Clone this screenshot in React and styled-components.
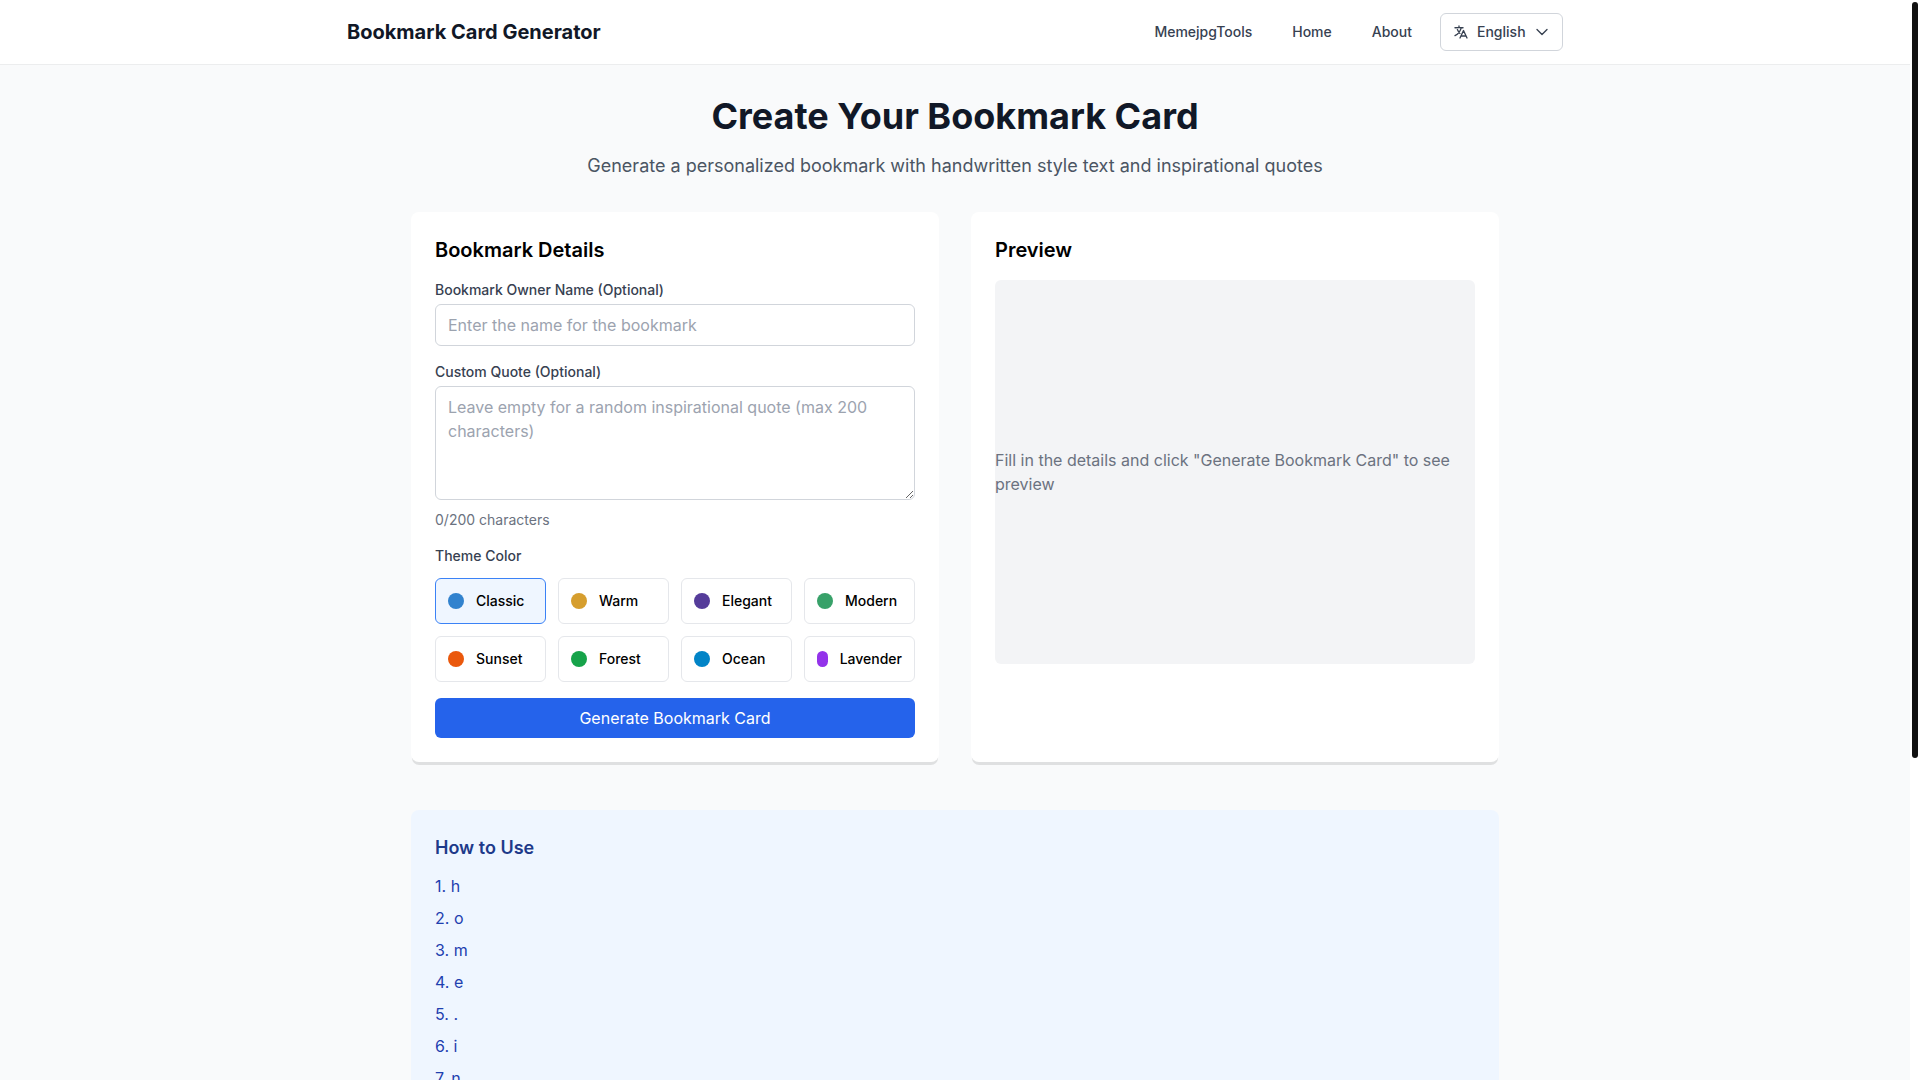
import React, { useEffect, useState } from 'react';
import styled, { createGlobalStyle } from 'styled-components';

const GlobalStyle = createGlobalStyle`
  *, *::before, *::after {
    box-sizing: border-box;
  }
  html {
    scrollbar-width: none; /* ScrollRail is shown instead */
  }
  body {
    margin: 0;
    font-family: Inter, 'Liberation Sans', sans-serif;
    font-size: 16px;
    line-height: 24px;
    color: #000;
  }
  h1, h2, p, ol {
    margin: 0;
    padding: 0;
  }
  button, input, textarea, select {
    font: inherit;
    color: inherit;
    margin: 0;
  }
`;

const Page = styled.div`
  min-height: 100vh;
  margin-right: 10px;
  background-color: #f9fafb;
`;

const ScrollRail = styled.div`
  position: fixed;
  top: 0;
  right: 0;
  bottom: 0;
  width: 10px;
  padding: 2px;
  background-color: #fff;
`;

const ScrollThumb = styled.div`
  width: 6px;
  border-radius: 3px;
  background-color: #111;
`;

const Header = styled.header`
  background-color: #fff;
  box-shadow: 0 1px 0 rgba(0, 0, 0, 0.05);
`;

const HeaderInner = styled.div`
  display: flex;
  align-items: center;
  justify-content: space-between;
  height: 64px;
  max-width: 1280px;
  margin: 0 auto;
  padding: 0 32px;
`;

const Brand = styled.a`
  font-size: 20px;
  line-height: 28px;
  font-weight: 700;
  color: #111827;
  text-decoration: none;
`;

const Nav = styled.nav`
  display: flex;
  align-items: center;
  gap: 16px;
  font-size: 14px;
  line-height: 20px;
  font-weight: 500;
  color: #374151;
`;

const NavLink = styled.a`
  padding: 8px 12px;
  color: inherit;
  text-decoration: none;
`;

const LanguageBox = styled.label`
  display: flex;
  align-items: center;
  gap: 8px;
  padding: 8px 12px;
  border: 1px solid #d1d5db;
  border-radius: 6px;
`;

const LanguageSelect = styled.select`
  appearance: none;
  padding: 0;
  border: none;
  background: none;
  cursor: pointer;
`;

const Icon = styled.svg`
  flex-shrink: 0;
  width: 16px;
  height: 16px;
  fill: none;
  stroke: currentColor;
  stroke-width: 2;
  stroke-linecap: round;
  stroke-linejoin: round;
`;

const Main = styled.main`
  max-width: 1152px;
  margin: 0 auto;
  padding: 32px;
`;

const Intro = styled.div`
  margin-bottom: 32px;
  text-align: center;
`;

const Title = styled.h1`
  margin-bottom: 16px;
  font-size: 36px;
  line-height: 40px;
  font-weight: 700;
  color: #111827;
`;

const Subtitle = styled.p`
  font-size: 18px;
  line-height: 28px;
  color: #4b5563;
`;

const Columns = styled.div`
  display: grid;
  grid-template-columns: repeat(2, minmax(0, 1fr));
  gap: 32px;
`;

const Card = styled.section`
  padding: 24px;
  background-color: #fff;
  border-radius: 8px;
  box-shadow: 0 4px 0 -1px rgba(0, 0, 0, 0.1);
`;

const CardTitle = styled.h2`
  margin-bottom: 16px;
  font-size: 20px;
  line-height: 28px;
  font-weight: 600;
`;

const Form = styled.form`
  display: flex;
  flex-direction: column;
  gap: 16px;
`;

const Field = styled.div`
  display: flex;
  flex-direction: column;
`;

const Label = styled.label`
  margin-bottom: ${(props) => props.$gap || '4px'};
  font-size: 14px;
  line-height: 20px;
  font-weight: 500;
  color: #374151;
`;

const TextInput = styled.input`
  width: 100%;
  height: 42px;
  padding: 8px 12px;
  border: 1px solid #d1d5db;
  border-radius: 6px;
  background-color: #fff;

  &::placeholder {
    color: #9ca3af;
  }
`;

const TextArea = styled.textarea`
  width: 100%;
  padding: 8px 12px;
  border: 1px solid #d1d5db;
  border-radius: 6px;
  background-color: #fff;
  resize: vertical;

  &::placeholder {
    color: #9ca3af;
  }
`;

const Counter = styled.p`
  margin-top: 10px;
  font-size: 14px;
  line-height: 20px;
  color: #6b7280;
`;

const ThemeGrid = styled.div`
  display: grid;
  grid-template-columns: repeat(4, minmax(0, 1fr));
  gap: 12px;
`;

const ThemeButton = styled.button`
  display: flex;
  align-items: center;
  gap: 12px;
  padding: 12px;
  border: 1px solid ${(props) => (props.$active ? '#3b82f6' : '#e5e7eb')};
  border-radius: 6px;
  background-color: ${(props) => (props.$active ? '#eff6ff' : '#fff')};
  font-size: 14px;
  line-height: 20px;
  font-weight: 500;
  cursor: pointer;
`;

const Swatch = styled.span`
  width: 16px;
  height: 16px;
  border-radius: 9999px;
  background-color: ${(props) => props.$color};
`;

const SubmitButton = styled.button`
  padding: 8px 16px;
  border: none;
  border-radius: 6px;
  background-color: #2563eb;
  color: #fff;
  cursor: pointer;
`;

const PreviewBox = styled.div`
  display: flex;
  align-items: center;
  justify-content: center;
  height: 384px;
  border-radius: 6px;
  background-color: #f3f4f6;
  color: #6b7280;
`;

const HowTo = styled.section`
  margin-top: 48px;
  padding: 24px;
  border-radius: 8px;
  background-color: #eff6ff;
`;

const HowToTitle = styled.h2`
  margin-bottom: 12px;
  font-size: 18px;
  line-height: 28px;
  font-weight: 600;
  color: #1e3a8a;
`;

const Steps = styled.ol`
  display: flex;
  flex-direction: column;
  gap: 8px;
  list-style: none;
  color: #1e40af;
`;

const Footer = styled.footer`
  height: 69px;
`;

const MAX_QUOTE = 200;

const themes = [
  { name: 'Classic', color: '#3182ce' },
  { name: 'Warm', color: '#d69e2e' },
  { name: 'Elegant', color: '#553c9a' },
  { name: 'Modern', color: '#38a169' },
  { name: 'Sunset', color: '#ea580c' },
  { name: 'Forest', color: '#16a34a' },
  { name: 'Ocean', color: '#0284c7' },
  { name: 'Lavender', color: '#9333ea' },
];

const steps = 'home.instructions'.split('');

const PageScrollbar = () => {
  const [thumb, setThumb] = useState({ top: 0, height: 0 });

  useEffect(() => {
    const update = () => {
      const view = window.innerHeight;
      const total = document.documentElement.scrollHeight;
      setThumb({
        top: Math.round((window.scrollY / total) * view),
        height: Math.round((view / total) * view) - 4,
      });
    };
    update();
    window.addEventListener('scroll', update);
    window.addEventListener('resize', update);
    return () => {
      window.removeEventListener('scroll', update);
      window.removeEventListener('resize', update);
    };
  }, []);

  return (
    <ScrollRail aria-hidden="true">
      <ScrollThumb style={{ height: thumb.height, marginTop: thumb.top }} />
    </ScrollRail>
  );
};

const App = () => {
  const [name, setName] = useState('');
  const [quote, setQuote] = useState('');
  const [theme, setTheme] = useState('Classic');

  return (
    <>
      <GlobalStyle />
      <Page>
        <Header>
          <HeaderInner>
            <Brand href="#">Bookmark Card Generator</Brand>
            <Nav>
              <NavLink href="#tools">MemejpgTools</NavLink>
              <NavLink href="#home">Home</NavLink>
              <NavLink href="#about">About</NavLink>
              <LanguageBox>
                <Icon viewBox="0 0 24 24" aria-hidden="true">
                  <path d="m10.5 21 5.25-11.25L21 21m-9-3h7.5M3 5.621a48.474 48.474 0 0 1 6-.371m0 0c1.12 0 2.233.038 3.334.114M9 5.25V3m3.334 2.364C11.176 10.658 7.69 15.08 3 17.502m9.334-12.138c.896.061 1.785.147 2.666.257m-4.589 8.495a18.023 18.023 0 0 1-3.827-5.802" />
                </Icon>
                <LanguageSelect aria-label="Language">
                  <option>English</option>
                </LanguageSelect>
                <Icon viewBox="0 0 24 24" aria-hidden="true">
                  <path d="m19.5 8.25-7.5 7.5-7.5-7.5" />
                </Icon>
              </LanguageBox>
            </Nav>
          </HeaderInner>
        </Header>
        <Main>
          <Intro>
            <Title>Create Your Bookmark Card</Title>
            <Subtitle>Generate a personalized bookmark with handwritten style text and inspirational quotes</Subtitle>
          </Intro>
          <Columns>
            <Card>
              <CardTitle>Bookmark Details</CardTitle>
              <Form onSubmit={(e) => e.preventDefault()}>
                <Field>
                  <Label htmlFor="name">Bookmark Owner Name (Optional)</Label>
                  <TextInput
                    id="name"
                    type="text"
                    placeholder="Enter the name for the bookmark"
                    value={name}
                    onChange={(e) => setName(e.target.value)}
                  />
                </Field>
                <Field>
                  <Label htmlFor="quote">Custom Quote (Optional)</Label>
                  <TextArea
                    id="quote"
                    rows={4}
                    maxLength={MAX_QUOTE}
                    placeholder="Leave empty for a random inspirational quote (max 200 characters)"
                    value={quote}
                    onChange={(e) => setQuote(e.target.value)}
                  />
                  <Counter>
                    {quote.length}/{MAX_QUOTE} characters
                  </Counter>
                </Field>
                <Field>
                  <Label as="span" id="theme-label" $gap="12px">
                    Theme Color
                  </Label>
                  <ThemeGrid role="group" aria-labelledby="theme-label">
                    {themes.map((item) => (
                      <ThemeButton
                        key={item.name}
                        type="button"
                        $active={theme === item.name}
                        aria-pressed={theme === item.name}
                        onClick={() => setTheme(item.name)}
                      >
                        <Swatch $color={item.color} />
                        <span>{item.name}</span>
                      </ThemeButton>
                    ))}
                  </ThemeGrid>
                </Field>
                <SubmitButton type="submit">Generate Bookmark Card</SubmitButton>
              </Form>
            </Card>
            <Card>
              <CardTitle>Preview</CardTitle>
              <PreviewBox>
                <p>Fill in the details and click "Generate Bookmark Card" to see preview</p>
              </PreviewBox>
            </Card>
          </Columns>
          <HowTo>
            <HowToTitle>How to Use</HowToTitle>
            <Steps>
              {steps.map((step, index) => (
                <li key={index}>
                  {index + 1}. {step}
                </li>
              ))}
            </Steps>
          </HowTo>
        </Main>
        <Footer />
      </Page>
      <PageScrollbar />
    </>
  );
};

export default App;
